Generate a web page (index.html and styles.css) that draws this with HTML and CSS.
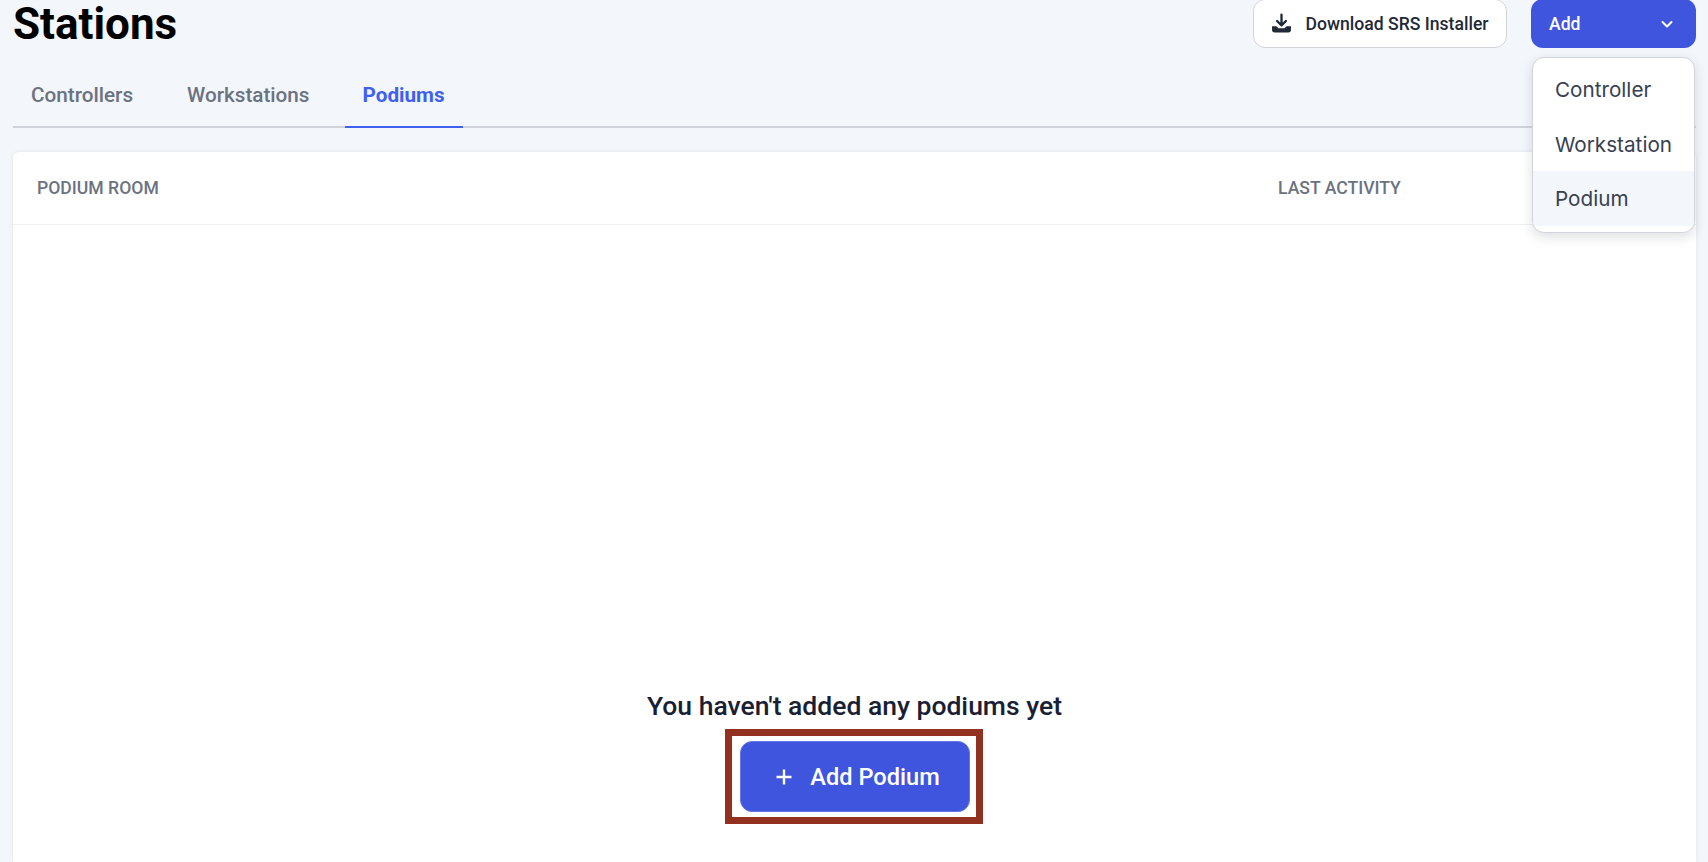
FILE: index.html
```html
<!DOCTYPE html>
<html lang="en">
<head>
    <meta charset="UTF-8">
    <meta name="viewport" content="width=device-width, initial-scale=1.0">
    <title>Stations</title>
    <link rel="stylesheet" href="styles.css">
</head>
<body>
    <div class="page">
        <header class="page-header">
            <h1>Stations</h1>
            <div class="actions">
                <button class="btn-outline">
                    <svg class="icon-download" viewBox="0 0 20 20" width="21" height="21" aria-hidden="true">
                        <path d="M10 1.5v10M5.8 7.6l4.2 4.2 4.2-4.2" fill="none" stroke="#1f2937" stroke-width="2.2" stroke-linecap="round" stroke-linejoin="round"/>
                        <path d="M1 12.5h4.1l2 2h5.8l2-2H19v3.5a2.5 2.5 0 0 1-2.5 2.5h-13A2.5 2.5 0 0 1 1 16z" fill="#1f2937"/>
                    </svg>
                    Download SRS Installer
                </button>
                <div class="add-wrap">
                    <button class="btn-add">
                        <span>Add</span>
                        <svg viewBox="0 0 14 14" width="14" height="14" aria-hidden="true">
                            <path d="M2.5 5l4.5 4.5L11.5 5" fill="none" stroke="#fff" stroke-width="2" stroke-linecap="round" stroke-linejoin="round"/>
                        </svg>
                    </button>
                    <ul class="menu">
                        <li>Controller</li>
                        <li>Workstation</li>
                        <li class="hover">Podium</li>
                    </ul>
                </div>
            </div>
        </header>

        <nav class="tabs">
            <a class="tab">Controllers</a>
            <a class="tab">Workstations</a>
            <a class="tab active">Podiums</a>
        </nav>

        <section class="card">
            <div class="table-head">
                <div class="col-room">PODIUM ROOM</div>
                <div class="col-activity">LAST ACTIVITY</div>
            </div>
            <div class="empty">
                <p>You haven't added any podiums yet</p>
                <div class="highlight">
                    <button class="btn-primary">
                        <svg viewBox="0 0 16 16" width="16" height="16" aria-hidden="true">
                            <path d="M8 .5v15M.5 8h15" fill="none" stroke="#fff" stroke-width="2.4"/>
                        </svg>
                        Add Podium
                    </button>
                </div>
            </div>
        </section>
    </div>
</body>
</html>
```

FILE: styles.css
```css
* {
    box-sizing: border-box;
}

html, body {
    height: 100%;
}

body {
    margin: 0;
    overflow: hidden;
    background-color: #f3f6fb;
    font-family: 'Roboto', 'Liberation Sans', sans-serif;
}

.page {
    height: 862px;
    padding: 0 12px 0 13px;
    display: flex;
    flex-direction: column;
}

.page-header {
    display: flex;
    justify-content: space-between;
    align-items: flex-start;
    height: 70px;
    margin-top: -1px;
}

h1 {
    margin: 2px 0 0;
    font-size: 44px;
    line-height: 46px;
    font-weight: 700;
    color: #000;
}

.actions {
    display: flex;
    gap: 24px;
}

.btn-outline {
    width: 254px;
    height: 49px;
    display: flex;
    align-items: center;
    justify-content: center;
    gap: 13px;
    background-color: #fff;
    border: 1px solid #d1d5db;
    border-radius: 12px;
    font-family: inherit;
    font-size: 17.6px;
    font-weight: 500;
    color: #1f2937;
}

.add-wrap {
    position: relative;
    z-index: 2;
}

.btn-add {
    width: 165px;
    height: 49px;
    display: flex;
    align-items: center;
    justify-content: space-between;
    padding: 0 22px 0 18px;
    background-color: #3f55de;
    border: none;
    border-radius: 12px;
    font-family: inherit;
    font-size: 17.6px;
    font-weight: 500;
    color: #fff;
}

.menu {
    position: absolute;
    top: 58px;
    left: 1px;
    width: 163px;
    margin: 0;
    padding: 4px 0 6px;
    list-style: none;
    background-color: #fff;
    border: 1px solid #d1d5db;
    border-radius: 12px;
    box-shadow: 0 4px 12px rgba(31, 41, 55, 0.15);
    overflow: hidden;
}

.menu li {
    height: 54.5px;
    line-height: 56px;
    padding-left: 22px;
    font-family: 'Inter', 'Liberation Sans', sans-serif;
    font-size: 20.7px;
    color: #374151;
}

.menu li.hover {
    background-color: #f3f6fb;
}

.tabs {
    display: flex;
    gap: 17px;
    height: 59px;
    border-bottom: 2px solid #d1d5db;
}

.tab {
    padding: 0 18px;
    line-height: 52px;
    font-size: 20.7px;
    font-weight: 500;
    color: #6b7280;
}

.tab:first-child {
    margin-right: 1px;
}

.tab.active {
    color: #4060f0;
    font-weight: 700;
    height: 59px;
    border-bottom: 2px solid #4060f0;
}

.card {
    flex: 1;
    margin-top: 24px;
    background-color: #fff;
    border-radius: 6px 6px 0 0;
    box-shadow: 0 0 4px rgba(31, 41, 55, 0.08);
    display: flex;
    flex-direction: column;
}

.table-head {
    display: flex;
    align-items: center;
    height: 73px;
    flex: none;
    padding-left: 24px;
    border-bottom: 1px solid #eef0f3;
    font-size: 17.6px;
    font-weight: 500;
    color: #6b7280;
}

.col-room {
    width: 1241px;
}

.empty {
    flex: 1;
    display: flex;
    flex-direction: column;
    align-items: center;
    padding-top: 464px;
}

.empty p {
    margin: 0;
    font-size: 26.5px;
    line-height: 34px;
    font-weight: 500;
    color: #1a2033;
}

.highlight {
    margin: 6px 2px 0 0;
    padding: 5px 6px 5px 8px;
    background-color: #fff;
    border: 7px solid #933121;
}

.btn-primary {
    width: 230px;
    height: 71px;
    display: flex;
    align-items: center;
    justify-content: center;
    gap: 18px;
    padding-left: 13px;
    background-color: #3f55de;
    border: 1px solid #6477e8;
    border-radius: 12px;
    font-family: inherit;
    font-size: 23.6px;
    font-weight: 500;
    color: #fff;
}
```
